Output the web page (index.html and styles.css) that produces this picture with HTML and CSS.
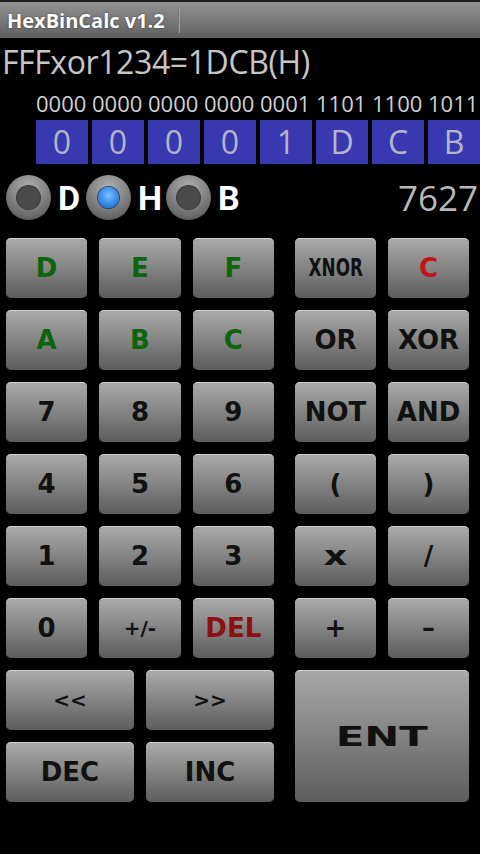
FILE: index.html
```html
<!DOCTYPE html>
<html lang="en">
<head>
  <meta charset="UTF-8" />
  <title>HexBinCalc</title>
  <link rel="stylesheet" href="styles.css">
</head>
<body>
  <div class="titlebar">
    <span class="app-name">HexBinCalc v1.2</span>
    <span class="divider"></span>
  </div>

  <div class="expr">FFFxor1234=1DCB(H)</div>

  <div class="bits">
    <span>0000</span><span>0000</span><span>0000</span><span>0000</span>
    <span>0001</span><span>1101</span><span>1100</span><span>1011</span>
  </div>
  <div class="nibbles">
    <span>0</span><span>0</span><span>0</span><span>0</span>
    <span>1</span><span>D</span><span>C</span><span>B</span>
  </div>

  <div class="mode-row">
    <label class="radio"><span class="dot"></span>D</label>
    <label class="radio on"><span class="dot"></span>H</label>
    <label class="radio"><span class="dot"></span>B</label>
    <span class="dec-value">7627</span>
  </div>

  <div class="keypad">
    <div class="left-keys">
      <button class="key hex">D</button>
      <button class="key hex">E</button>
      <button class="key hex">F</button>
      <button class="key hex">A</button>
      <button class="key hex">B</button>
      <button class="key hex">C</button>
      <button class="key">7</button>
      <button class="key">8</button>
      <button class="key">9</button>
      <button class="key">4</button>
      <button class="key">5</button>
      <button class="key">6</button>
      <button class="key">1</button>
      <button class="key">2</button>
      <button class="key">3</button>
      <button class="key">0</button>
      <button class="key small">+/-</button>
      <button class="key del">DEL</button>
      <button class="key wide small">&lt;&lt;</button>
      <button class="key wide small">&gt;&gt;</button>
      <button class="key wide">DEC</button>
      <button class="key wide">INC</button>
    </div>
    <div class="right-keys">
      <button class="key"><span class="narrow">XNOR</span></button>
      <button class="key clear">C</button>
      <button class="key">OR</button>
      <button class="key">XOR</button>
      <button class="key">NOT</button>
      <button class="key">AND</button>
      <button class="key">(</button>
      <button class="key">)</button>
      <button class="key"><span class="wider">x</span></button>
      <button class="key">/</button>
      <button class="key">+</button>
      <button class="key">–</button>
      <button class="key enter"><span class="stretch">ENT</span></button>
    </div>
  </div>
</body>
</html>
```

FILE: styles.css
```css
body {
  margin: 0;
  background: #000;
  color: #c8c8c8;
  font-family: 'Open Sans', sans-serif;
  width: 480px;
  height: 854px;
  overflow: hidden;
}
.titlebar {
  border-top: 2px solid #1e1e1e;
  height: 36px;
  background: linear-gradient(#939393, #5f5f5f);
  display: flex;
  align-items: center;
}
.app-name {
  color: #fff;
  font-weight: bold;
  font-size: 20px;
  padding-left: 7px;
  text-shadow: 0 0 2px #333;
}
.divider {
  margin-left: 13px;
  width: 1px;
  height: 26px;
  background: #777;
  border-right: 1px solid #a0a0a0;
}
.expr {
  font-size: 32px;
  height: 48px;
  line-height: 48px;
  padding-left: 2px;
  color: #c6c6c6;
  letter-spacing: -0.4px;
}
.bits,
.nibbles {
  display: grid;
  grid-template-columns: repeat(8, 52px);
  column-gap: 4px;
  margin-left: 36px;
}
.bits {
  font-size: 22px;
  height: 34px;
  line-height: 34px;
  color: #d0d0d0;
}
.nibbles span {
  background: #3838b0;
  height: 44px;
  line-height: 44px;
  text-align: center;
  font-size: 32px;
  color: #b4b4c8;
}
.mode-row {
  display: flex;
  align-items: center;
  height: 45px;
  margin-top: 11px;
  padding-left: 6px;
}
.radio {
  display: flex;
  align-items: center;
  font-family: Roboto, sans-serif;
  font-weight: bold;
  font-size: 34px;
  color: #fff;
  width: 80px;
}
.dot {
  width: 45px;
  height: 45px;
  border-radius: 50%;
  background: radial-gradient(circle at 50% 30%, #b4b4b4, #7a7a7a 55%, #4e4e4e);
  display: flex;
  align-items: center;
  justify-content: center;
  margin-right: 7px;
}
.dot::after {
  content: "";
  width: 23px;
  height: 23px;
  border-radius: 50%;
  background: #4a4a4a;
  box-shadow: 0 0 0 1px #3a3a3a;
}
.radio.on .dot::after {
  width: 21px;
  height: 21px;
  background: radial-gradient(circle at 50% 40%, #7ec0ff, #2e86e6 60%, #1a5cb0);
  box-shadow: 0 0 0 1px #2a4a80;
}
.dec-value {
  margin-left: auto;
  font-size: 35px;
  color: #b8b8b8;
  padding-right: 2px;
}
.keypad {
  display: flex;
  margin-top: 18px;
  padding-left: 6px;
  gap: 21px;
}
.left-keys {
  width: 268px;
  display: grid;
  grid-template-columns: repeat(6, 1fr);
  grid-auto-rows: 60px;
  gap: 12px;
}
.right-keys {
  width: 174px;
  display: grid;
  grid-template-columns: 1fr 1fr;
  grid-auto-rows: 60px;
  gap: 12px;
}
.key {
  grid-column: span 2;
  border: none;
  border-radius: 5px;
  background: linear-gradient(#aaaaaa, #5d5d5d);
  box-shadow: inset 0 1px 0 #cdcdcd;
  font-family: 'DejaVu Sans', sans-serif;
  font-weight: bold;
  font-size: 26px;
  color: #111;
  padding: 0;
  display: flex;
  align-items: center;
  justify-content: center;
}
.right-keys .key {
  grid-column: span 1;
}
.left-keys .wide {
  grid-column: span 3;
}
.key.small {
  font-size: 20px;
}
.hex {
  color: #0c640c;
}
.clear {
  color: #c41414;
}
.del {
  color: #8c1010;
}
.narrow {
  display: inline-block;
  font-size: 24px;
  transform: scaleX(0.7);
}
.wider {
  display: inline-block;
  transform: scaleX(1.4);
}
.right-keys .enter {
  grid-column: span 2;
  grid-row: span 2;
  background: linear-gradient(#a8a8a8, #5d5d5d);
}
.stretch {
  display: inline-block;
  font-size: 27px;
  transform: scaleX(1.55);
}
```
